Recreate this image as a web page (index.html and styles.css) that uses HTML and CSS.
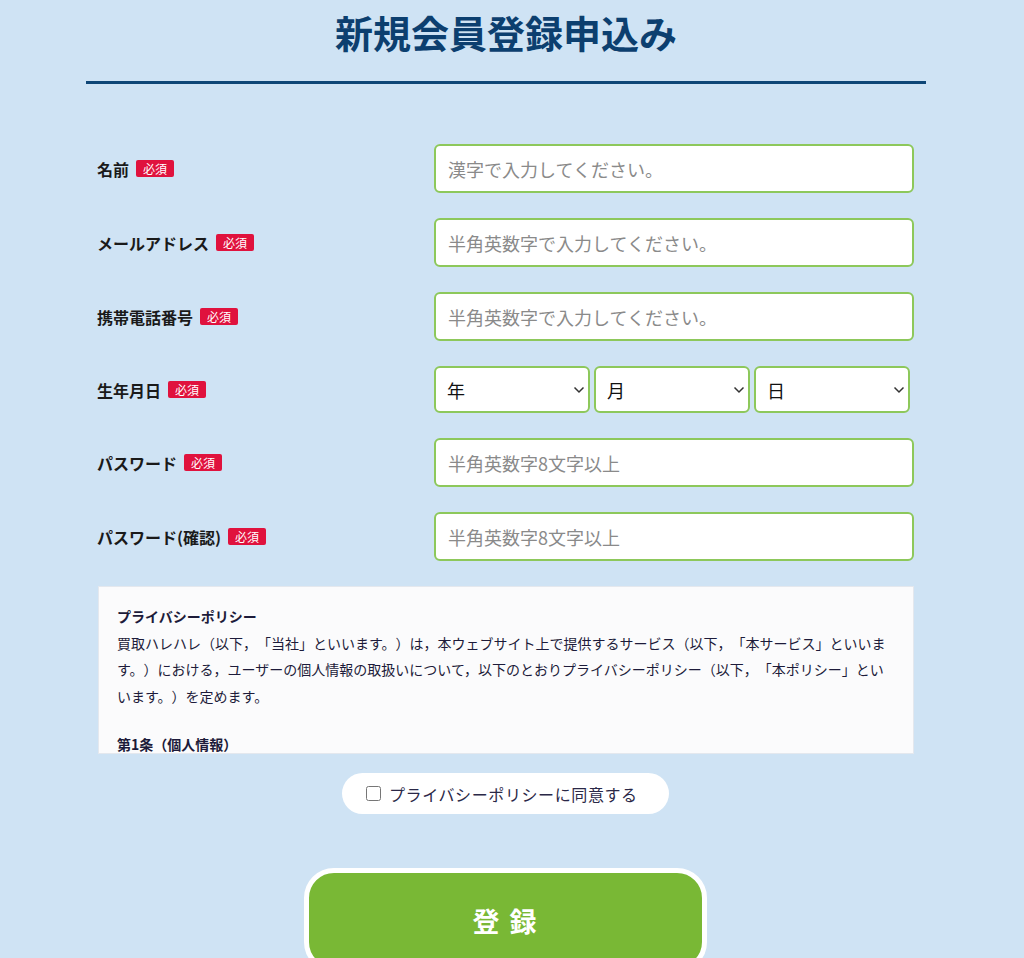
FILE: index.html
```html
<!DOCTYPE html>
<html lang="ja">
<head>
<meta charset="utf-8">
<title>新規会員登録申込み</title>
<link rel="stylesheet" href="styles.css">
</head>
<body>
<div class="page">
  <h1 class="title">新規会員登録申込み</h1>
  <form class="form">
    <div class="row">
      <div class="label">名前<span class="req">必須</span></div>
      <div class="field"><input class="input" type="text" placeholder="漢字で入力してください。"></div>
    </div>
    <div class="row">
      <div class="label">メールアドレス<span class="req">必須</span></div>
      <div class="field"><input class="input" type="text" placeholder="半角英数字で入力してください。"></div>
    </div>
    <div class="row">
      <div class="label">携帯電話番号<span class="req">必須</span></div>
      <div class="field"><input class="input" type="text" placeholder="半角英数字で入力してください。"></div>
    </div>
    <div class="row row-date">
      <div class="label">生年月日<span class="req">必須</span></div>
      <div class="field selects">
        <select class="select"><option>年</option></select>
        <select class="select"><option>月</option></select>
        <select class="select"><option>日</option></select>
      </div>
    </div>
    <div class="row">
      <div class="label">パスワード<span class="req">必須</span></div>
      <div class="field"><input class="input" type="password" placeholder="半角英数字8文字以上"></div>
    </div>
    <div class="row">
      <div class="label">パスワード(確認)<span class="req">必須</span></div>
      <div class="field"><input class="input" type="password" placeholder="半角英数字8文字以上"></div>
    </div>

    <div class="policy">
      <p class="policy-head">プライバシーポリシー</p>
      <p class="policy-text">買取ハレハレ（以下，「当社」といいます。）は，本ウェブサイト上で提供するサービス（以下，「本サービス」といいます。）における，ユーザーの個人情報の取扱いについて，以下のとおりプライバシーポリシー（以下，「本ポリシー」といいます。）を定めます。</p>
      <p class="policy-head sec">第1条（個人情報）</p>
    </div>

    <div class="agree-wrap">
      <div class="agree"><input class="check" type="checkbox" id="agree"><label class="agree-text" for="agree">プライバシーポリシーに同意する</label></div>
    </div>

    <div class="submit-wrap">
      <button class="submit" type="button">登 録</button>
    </div>
  </form>
</div>
</body>
</html>
```

FILE: styles.css
```css
html, body {
  margin: 0;
  padding: 0;
}
body {
  background: #cfe3f4;
  font-family: "Noto Sans CJK JP", "Noto Sans", sans-serif;
  color: #1a1a1a;
  text-spacing-trim: space-all;
}
.page {
  width: 840px;
  margin-left: 86px;
}
.title {
  margin: 0;
  padding: 3px 0 20px;
  text-align: center;
  font-size: 38px;
  line-height: 58px;
  font-weight: 700;
  color: #0c3f6f;
  border-bottom: 3px solid #0e4676;
}
.form {
  padding: 60px 12px 0 11px;
}
.row {
  display: flex;
  align-items: center;
  height: 49px;
  margin-bottom: 25px;
}
.row-date {
  height: 47px;
  margin-bottom: 25px;
}
.label {
  width: 337px;
  display: flex;
  align-items: center;
  font-size: 16px;
  font-weight: 700;
  color: #1a1a1a;
}
.req {
  display: inline-block;
  margin-left: 7px;
  background: #e0123d;
  color: #fff;
  font-size: 12px;
  font-weight: 400;
  line-height: 17px;
  padding: 0 7px;
  border-radius: 2px;
}
.field {
  flex: 1;
}
.input {
  box-sizing: border-box;
  width: 480px;
  height: 49px;
  border: 2px solid #8dc85b;
  border-radius: 6px;
  background: #fff;
  padding: 0 12px;
  font-family: "Noto Sans CJK JP", sans-serif;
  font-size: 18px;
  color: #333;
  outline: none;
}
.input::placeholder {
  color: #8a8a8a;
}
.selects {
  display: flex;
  gap: 4px;
}
.select {
  box-sizing: border-box;
  width: 156px;
  height: 47px;
  border: 2px solid #8dc85b;
  border-radius: 6px;
  background: #fff url("data:image/svg+xml;utf8,<svg xmlns='http://www.w3.org/2000/svg' width='12' height='8' viewBox='0 0 12 8'><path d='M1.5 1.5 L6 6 L10.5 1.5' fill='none' stroke='%23333' stroke-width='1.5'/></svg>") no-repeat right 3px center;
  appearance: none;
  -webkit-appearance: none;
  padding: 0 11px;
  font-family: "Noto Sans CJK JP", sans-serif;
  font-size: 18px;
  color: #111;
}
.policy {
  box-sizing: border-box;
  height: 168px;
  overflow: hidden;
  margin: 1px 0 0 1px;
  width: 816px;
  background: #fbfbfc;
  border: 1px solid #e4e8ee;
  padding: 16px 18px;
  color: #1d1b3a;
  font-size: 14px;
  line-height: 26.5px;
}
.policy p {
  margin: 0;
}
.policy-head {
  font-weight: 700;
}
.policy-head.sec {
  margin-top: 22px !important;
}
.agree-wrap {
  display: flex;
  justify-content: center;
  padding-top: 19px;
}
.agree {
  display: flex;
  align-items: center;
  gap: 8px;
  background: #fff;
  height: 41px;
  width: 327px;
  box-sizing: border-box;
  padding-left: 24px;
  border-radius: 21px;
  font-size: 16px;
  color: #2a2847;
}
.agree-text {
  line-height: 24px;
  white-space: nowrap;
  letter-spacing: 0.6px;
}
.check {
  margin: 0;
  width: 15px;
  height: 15px;
  flex: none;
}
.submit-wrap {
  display: flex;
  justify-content: center;
  padding-top: 54px;
}
.submit {
  box-sizing: border-box;
  width: 403px;
  height: 104px;
  background: #79b835;
  border: 5px solid #fff;
  border-radius: 30px;
  color: #fff;
  font-family: "Noto Sans CJK JP", sans-serif;
  font-size: 27px;
  font-weight: 700;
  letter-spacing: 2px;
}
```
